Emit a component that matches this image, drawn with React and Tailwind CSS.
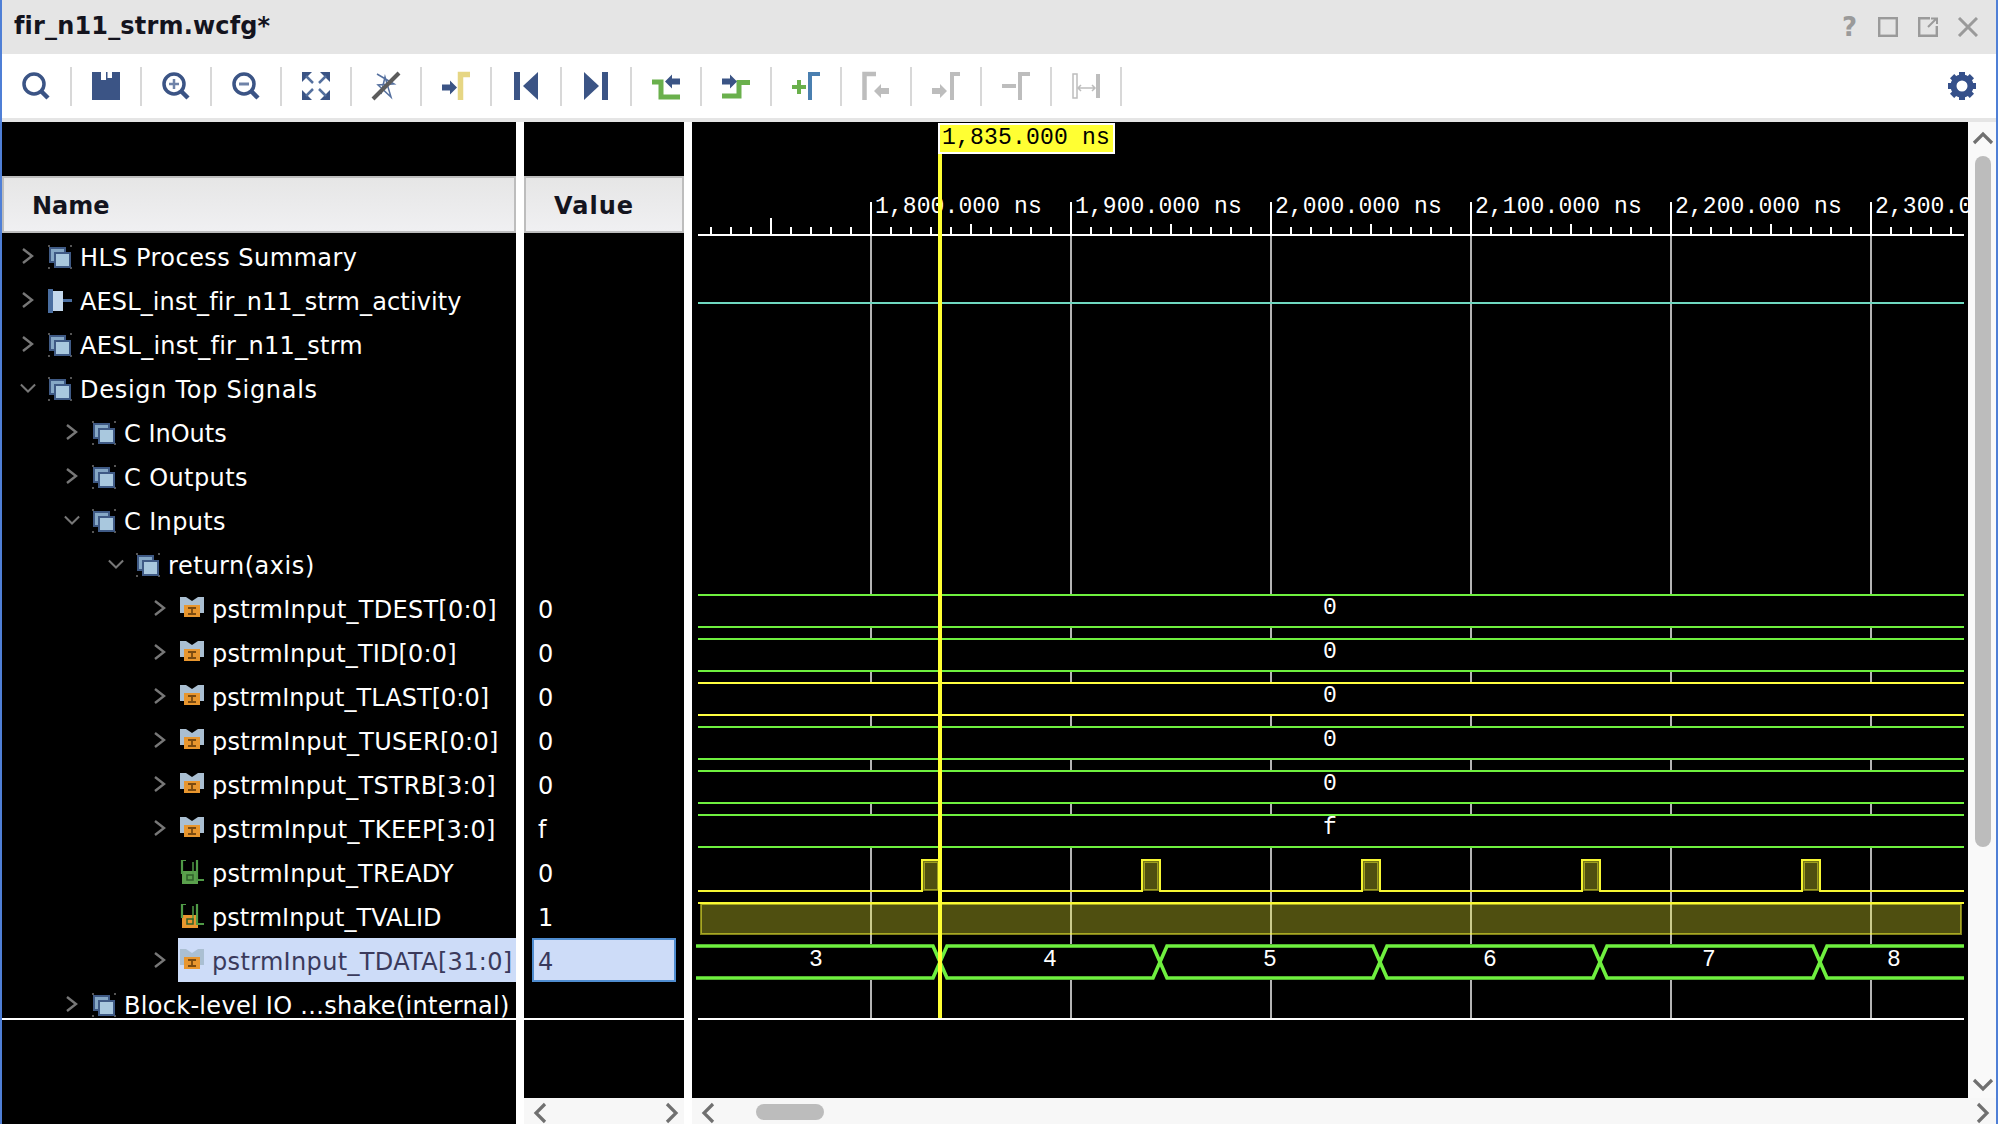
import React from 'react';

const C = '#3b5485';
const G = '#6ab04c';
const D = '#bdbdbd';

function Box({ children }) {
  return (
    <svg width="28" height="28" viewBox="0 0 28 28" className="block overflow-visible">
      {children}
    </svg>
  );
}

function Lens({ children }) {
  return (
    <>
      <circle cx="12" cy="12" r="10" fill="none" stroke={C} strokeWidth="3.5" />
      <path d="M19 19 L26 26" stroke={C} strokeWidth="4.5" />
      {children}
    </>
  );
}

function Arrow({ x, y, dir, fill }) {
  const d =
    dir === 'right'
      ? `M${x} ${y + 3} h8 v-4 l7 7 l-7 7 v-4 h-8 z`
      : `M${x + 15} ${y + 3} h-8 v-4 l-7 7 l7 7 v-4 h8 z`;
  return <path d={d} fill={fill} />;
}

const tools = [
  <Lens key="a" />,
  <path key="b" fillRule="evenodd" d="M0 0 H9 V8 H28 V28 H0 Z M14 0 H28 V8 H14 Z M15.5 0 H20 V6 H15.5 Z" fill={C} />,
  <Lens key="c"><path d="M7 12 H17 M12 7 V17" stroke="#6f83a8" strokeWidth="2.5" /></Lens>,
  <Lens key="d"><path d="M7 12 H17" stroke="#6f83a8" strokeWidth="3" /></Lens>,
  <g key="e">
    <g fill={C}>
      <path d="M0 0 H10 L0 10 Z" />
      <path d="M28 0 H18 L28 10 Z" />
      <path d="M0 28 H10 L0 18 Z" />
      <path d="M28 28 H18 L28 18 Z" />
    </g>
    <path d="M4 4 L11 11 M24 4 L17 11 M4 24 L11 17 M24 24 L17 17" stroke="#54709e" strokeWidth="2.5" />
  </g>,
  <g key="f">
    <path d="M5 2 L22 12 L6 13 L19 25 L13 5 L9 22" fill="none" stroke="#55709f" strokeWidth="1.5" />
    <path d="M1 27 L27 1" stroke="#5c5c5c" strokeWidth="4" />
  </g>,
  <g key="g">
    <Arrow x={0} y={9.5} dir="right" fill={C} />
    <path d="M18.5 28 V2.5 H28" fill="none" stroke="#e6d684" strokeWidth="5.5" />
  </g>,
  <g key="h" fill={C}>
    <rect x="2" y="0" width="6" height="28" />
    <path d="M26 0 V28 L11 14 Z" />
  </g>,
  <g key="i" fill={C}>
    <path d="M2 0 V28 L17 14 Z" />
    <rect x="20" y="0" width="6" height="28" />
  </g>,
  <g key="j">
    <path d="M0 10 H9 V25 H28" fill="none" stroke={G} strokeWidth="5" />
    <Arrow x={13} y={3.5} dir="left" fill={C} />
  </g>,
  <g key="k">
    <path d="M0 24 H17 V10.5 H28" fill="none" stroke={G} strokeWidth="5" />
    <Arrow x={0} y={3.5} dir="right" fill={C} />
  </g>,
  <g key="l">
    <path d="M0 15 H14 M7 8 V22" stroke={G} strokeWidth="4" />
    <path d="M18 28 V2 H28" fill="none" stroke="#4a7fb0" strokeWidth="4" />
  </g>,
  <g key="m">
    <path d="M2.5 28 V2 H14" fill="none" stroke={D} strokeWidth="4.5" />
    <Arrow x={12} y={13} dir="left" fill={D} />
  </g>,
  <g key="n">
    <Arrow x={0} y={13} dir="right" fill={D} />
    <path d="M20 28 V2 H28" fill="none" stroke={D} strokeWidth="4" />
  </g>,
  <g key="o">
    <path d="M0 14 H14" stroke={D} strokeWidth="4" />
    <path d="M18 28 V2 H28" fill="none" stroke={D} strokeWidth="4" />
  </g>,
  <g key="p">
    <rect x="1" y="2" width="4" height="24" fill="none" stroke={D} strokeWidth="1.5" />
    <rect x="24" y="2" width="4" height="24" fill={D} />
    <path d="M6 16 H23 M9 13 L6 16 L9 19 M20 13 L23 16 L20 19" fill="none" stroke={D} strokeWidth="1.5" />
  </g>,
];

function Gear() {
  const teeth = [0, 45, 90, 135, 180, 225, 270, 315];
  return (
    <Box>
      {teeth.map((a) => (
        <rect key={a} x="11" y="0" width="6" height="8" fill="#35508a" transform={`rotate(${a} 14 14)`} />
      ))}
      <circle cx="14" cy="14" r="8.5" fill="none" stroke="#35508a" strokeWidth="6" />
    </Box>
  );
}

function GroupIcon() {
  return (
    <svg width="24" height="24" viewBox="0 0 24 24" className="mt-px block shrink-0">
      <g fill="#555555">
        <rect x="0" y="0" width="2" height="2" />
        <rect x="22" y="0" width="2" height="2" />
        <rect x="0" y="22" width="2" height="2" />
        <rect x="22" y="22" width="2" height="2" />
      </g>
      <rect x="2" y="3" width="15" height="14" fill="#86a8c6" stroke="#3f5a85" strokeWidth="2" />
      <rect x="7" y="8" width="15" height="14" fill="#a9c8de" stroke="#3f5a85" strokeWidth="2" />
    </svg>
  );
}

function ActivityIcon() {
  return (
    <svg width="24" height="24" viewBox="0 0 24 24" className="mt-px block shrink-0">
      <rect x="0" y="0" width="5" height="24" fill="#4a6ea0" />
      <rect x="5" y="2" width="10" height="20" fill="#c4d8ec" />
      <rect x="15" y="10" width="9" height="3" fill="#4a6ea0" />
    </svg>
  );
}

function BusIcon() {
  return (
    <svg width="24" height="24" viewBox="0 0 24 24" className="block shrink-0">
      <path d="M0 1 H6 L12 5 L18 1 H24 V17 H20 V9 H4 V17 H0 Z" fill="#aabfd2" />
      <rect x="4" y="9" width="16" height="12" fill="#e8962e" />
      <path d="M8 12 H16 M12 12 V18 M8 18 H16" stroke="#7a4a10" strokeWidth="1.8" fill="none" />
    </svg>
  );
}

function WireIcon({ fill }) {
  return (
    <svg width="24" height="24" viewBox="0 0 24 24" className="block shrink-0">
      <rect x="2" y="11" width="16" height="13" fill={fill} />
      <path d="M2 0 V14 M17 0 V20 H24 M2 0 H6" fill="none" stroke="#4f9a46" strokeWidth="2.2" />
      <path d="M13 2 V16" stroke="#4f9a46" strokeWidth="1.5" />
      <rect x="7" y="15" width="6" height="5" fill="none" stroke="#2f5f2a" strokeWidth="1.5" />
    </svg>
  );
}

function ChevRight({ color = '#777777' }) {
  return (
    <svg width="16" height="18" viewBox="0 0 16 18" className="block">
      <path d="M3 2 L12 9 L3 16" fill="none" stroke={color} strokeWidth="2.4" />
    </svg>
  );
}

function ChevDown() {
  return (
    <svg width="18" height="12" viewBox="0 0 18 12" className="block">
      <path d="M1 2 L9 10 L17 2" fill="none" stroke="#777777" strokeWidth="2.2" />
    </svg>
  );
}

const rows = [
  { t: 'HLS Process Summary', pad: 'pl-[18px]', ch: 'r', icon: 'g', tr: 'tracking-[0.45px]' },
  { t: 'AESL_inst_fir_n11_strm_activity', pad: 'pl-[18px]', ch: 'r', icon: 'a', tr: 'tracking-[0.12px]' },
  { t: 'AESL_inst_fir_n11_strm', pad: 'pl-[18px]', ch: 'r', icon: 'g', tr: 'tracking-[0.25px]' },
  { t: 'Design Top Signals', pad: 'pl-[18px]', ch: 'd', icon: 'g', tr: 'tracking-[0.72px]' },
  { t: 'C InOuts', pad: 'pl-[62px]', ch: 'r', icon: 'g', tr: 'tracking-[0px]' },
  { t: 'C Outputs', pad: 'pl-[62px]', ch: 'r', icon: 'g', tr: 'tracking-[0.4px]' },
  { t: 'C Inputs', pad: 'pl-[62px]', ch: 'd', icon: 'g', tr: 'tracking-[0.37px]' },
  { t: 'return(axis)', pad: 'pl-[106px]', ch: 'd', icon: 'g', tr: 'tracking-[0.55px]' },
  { t: 'pstrmInput_TDEST[0:0]', pad: 'pl-[150px]', ch: 'r', icon: 'b', v: '0', tr: 'tracking-[0.25px]' },
  { t: 'pstrmInput_TID[0:0]', pad: 'pl-[150px]', ch: 'r', icon: 'b', v: '0', tr: 'tracking-[0.16px]' },
  { t: 'pstrmInput_TLAST[0:0]', pad: 'pl-[150px]', ch: 'r', icon: 'b', v: '0', tr: 'tracking-[0.04px]' },
  { t: 'pstrmInput_TUSER[0:0]', pad: 'pl-[150px]', ch: 'r', icon: 'b', v: '0', tr: 'tracking-[0.28px]' },
  { t: 'pstrmInput_TSTRB[3:0]', pad: 'pl-[150px]', ch: 'r', icon: 'b', v: '0', tr: 'tracking-[0.22px]' },
  { t: 'pstrmInput_TKEEP[3:0]', pad: 'pl-[150px]', ch: 'r', icon: 'b', v: 'f', tr: 'tracking-[0.34px]' },
  { t: 'pstrmInput_TREADY', pad: 'pl-[150px]', icon: 'wg', v: '0', tr: 'tracking-[0.18px]' },
  { t: 'pstrmInput_TVALID', pad: 'pl-[150px]', icon: 'wo', v: '1', tr: 'tracking-[0.03px]' },
  { t: 'pstrmInput_TDATA[31:0]', pad: 'pl-[150px]', ch: 'r', icon: 'b', v: '4', sel: true, tr: 'tracking-[0.33px]' },
];

function RowIcon({ k }) {
  if (k === 'g') return <GroupIcon />;
  if (k === 'a') return <ActivityIcon />;
  if (k === 'b') return <BusIcon />;
  if (k === 'wg') return <WireIcon fill="#5aa04c" />;
  return <WireIcon fill="#e8962e" />;
}

function TreeRow({ r }) {
  return (
    <div className={`flex h-[44px] items-center ${r.pad}`}>
      <div className="flex h-full w-4 shrink-0 items-center justify-center">
        {r.ch === 'r' && <ChevRight />}
        {r.ch === 'd' && <ChevDown />}
      </div>
      <div className={`ml-[10px] flex h-full flex-1 items-center pl-[2px] ${r.sel ? 'bg-[#cddcf8] text-[#3a3a5c]' : 'text-white'}`}>
        <RowIcon k={r.icon} />
        <span className={`ml-2 whitespace-nowrap pt-[3px] text-[24px] ${r.tr}`}>{r.t}</span>
      </div>
    </div>
  );
}

function HeaderCell({ children, pad }) {
  return (
    <div className={`flex h-[57px] items-center border-2 border-[#bdbdbd] bg-gradient-to-b from-[#e6e6e6] to-[#f0f0f2] pt-[2px] text-[24px] font-bold text-[#14141e] ${pad}`}>
      {children}
    </div>
  );
}

const majors = [871, 1071, 1271, 1471, 1671, 1871];
const labels = ['1,800.000 ns', '1,900.000 ns', '2,000.000 ns', '2,100.000 ns', '2,200.000 ns', '2,300.000 ns'];
const segs = [[235, 595], [627, 639], [671, 683], [715, 727], [759, 771], [803, 815], [847, 944], [980, 1018]];
const GREEN = '#6ff03f';
const YEL = '#ffff40';
const busLines = [
  [595, GREEN], [627, GREEN], [639, GREEN], [671, GREEN], [683, YEL], [715, YEL],
  [727, GREEN], [759, GREEN], [771, GREEN], [803, GREEN], [815, GREEN], [847, GREEN],
];
const busLabels = [[614, '0'], [658, '0'], [702, '0'], [746, '0'], [790, '0'], [834, 'f']];
const pulses = [921, 1141, 1361, 1581, 1801];
const crosses = [940, 1160, 1380, 1600, 1820];
const dataVals = [[816, '3'], [1050, '4'], [1270, '5'], [1490, '6'], [1709, '7'], [1894, '8']];

function ticks() {
  const out = [];
  for (let x = 711; x <= 1960; x += 20) {
    if (majors.includes(x)) continue;
    let top = 227;
    if (x === 771) top = 218;
    else if ((x - 771) % 200 === 0 || (x - 971) % 200 === 0) top = 224;
    out.push(<path key={x} d={`M${x} ${top} V235`} stroke="#ffffff" strokeWidth="2" />);
  }
  return out;
}

function railPath(flip) {
  const a = flip ? 978 : 946;
  const b = flip ? 946 : 978;
  let d = `M696 ${a}`;
  crosses.forEach((c, i) => {
    const to = i % 2 === 0 ? b : a;
    d += ` H${c - 7} L${c + 7} ${to}`;
  });
  return d + ' H1964';
}

function pulsePath() {
  let d = 'M698 891';
  pulses.forEach((p) => {
    d += ` H${p + 1} V860 H${p + 19} V891`;
  });
  return d + ' H1964';
}

function Waves() {
  return (
    <svg width="1276" height="976" viewBox="692 122 1276 976" className="block font-['Liberation_Mono',monospace]" shapeRendering="crispEdges">
      {majors.map((x) => (
        <g key={x}>
          <path d={`M${x} 202 V235`} stroke="#ffffff" strokeWidth="2" />
          {segs.map(([a, b]) => (
            <path key={a} d={`M${x} ${a} V${b}`} stroke="#b4b4b4" strokeWidth="2" />
          ))}
        </g>
      ))}
      <path d="M698 235 H1964" stroke="#ffffff" strokeWidth="2" />
      {ticks()}
      {majors.map((x, i) => (
        <text key={x} x={x + 4} y="213" fontSize="23" letterSpacing="0.1" fill="#ffffff">{labels[i]}</text>
      ))}
      <path d="M698 303 H1964" stroke="#6fd9c0" strokeWidth="2" />
      {busLines.map(([y, c]) => (
        <path key={y} d={`M698 ${y} H1964`} stroke={c} strokeWidth="2" />
      ))}
      {busLabels.map(([y, s]) => (
        <text key={y} x="1330" y={y} fontSize="23" fill="#ffffff" textAnchor="middle">{s}</text>
      ))}
      {pulses.map((p) => (
        <rect key={p} x={p + 3} y="862" width="14" height="28" fill="#ffff33" fillOpacity="0.31" stroke="#ffff33" strokeOpacity="0.45" strokeWidth="2" />
      ))}
      <path d={pulsePath()} fill="none" stroke="#f6f633" strokeWidth="2" />
      <path d="M698 903 H1964" stroke="#f6f633" strokeWidth="2" />
      <rect x="701" y="904" width="1260" height="30" fill="#ffff33" fillOpacity="0.31" stroke="#ffff33" strokeOpacity="0.5" strokeWidth="2" />
      <g shapeRendering="auto">
        <path d={railPath(false)} fill="none" stroke={GREEN} strokeWidth="3.6" />
        <path d={railPath(true)} fill="none" stroke={GREEN} strokeWidth="3.6" />
      </g>
      {dataVals.map(([x, s]) => (
        <text key={x} x={x} y="966" fontSize="23" fill="#ffffff" textAnchor="middle">{s}</text>
      ))}
      <path d="M698 1019 H1964" stroke="#ffffff" strokeWidth="2" />
      <path d="M940 153 V1018" stroke="#ffff33" strokeWidth="4" />
      <rect x="939" y="124" width="175" height="29" fill="#ffff33" stroke="#ffffff" strokeWidth="2" />
      <text x="942" y="144" fontSize="23" letterSpacing="0.2" fill="#000000">1,835.000 ns</text>
    </svg>
  );
}

function HBarChevronLeft() {
  return (
    <svg width="14" height="22" viewBox="0 0 14 22" className="mt-[3px] block">
      <path d="M12 2 L3 11 L12 20" fill="none" stroke="#707070" strokeWidth="3.2" />
    </svg>
  );
}

function HBarChevronRight() {
  return (
    <svg width="14" height="22" viewBox="0 0 14 22" className="mt-[3px] block">
      <path d="M2 2 L11 11 L2 20" fill="none" stroke="#707070" strokeWidth="3.2" />
    </svg>
  );
}

export default function App() {
  return (
    <div className="flex h-[1124px] w-[1998px] flex-col overflow-hidden border-x-2 border-[#4f7fd6] bg-white font-['DejaVu_Sans',sans-serif]">
      <div className="flex h-[54px] shrink-0 items-center bg-[#e5e5e5] pl-[12px] pr-[18px]">
        <span className="pb-[2px] text-[24px] font-bold tracking-[0.17px] text-[#14141e]">fir_n11_strm.wcfg*</span>
        <div className="flex-1" />
        <span className="mr-[21px] text-[26px] font-bold leading-none text-[#9a9a9a]">?</span>
        <svg width="100" height="20" viewBox="0 0 100 20" className="block">
          <g fill="none" stroke="#9a9a9a" strokeWidth="2.4">
            <rect x="1.2" y="1.2" width="17.6" height="17.6" />
            <path d="M52 1.2 H41.2 V18.8 H58.8 V9" />
            <path d="M50 10 L58 2 M53 1.5 H59 V7" strokeWidth="2" />
            <path d="M81 1 L99 19 M99 1 L81 19" strokeWidth="3" />
          </g>
        </svg>
      </div>

      <div className="flex h-[68px] shrink-0 items-center border-b-4 border-[#e5e5e5] bg-white pr-[20px]">
        {tools.map((icon, i) => (
          <React.Fragment key={i}>
            <div className="flex w-[68px] items-center justify-center">
              <Box>{icon}</Box>
            </div>
            <div className="h-[39px] w-[2px] bg-[#d8d8d8]" />
          </React.Fragment>
        ))}
        <div className="flex-1" />
        <Gear />
      </div>

      <div className="flex min-h-0 flex-1 bg-white">
        <div className="flex w-[514px] shrink-0 flex-col bg-black">
          <div className="h-[54px] shrink-0" />
          <HeaderCell pad="pl-[28px]">Name</HeaderCell>
          <div className="mt-px shrink-0">
            {rows.map((r) => (
              <TreeRow key={r.t} r={r} />
            ))}
            <div className="h-[38px] border-b-2 border-white">
              <TreeRow r={{ t: 'Block-level IO ...shake(internal)', pad: 'pl-[62px]', ch: 'r', icon: 'g', tr: 'tracking-[0.3px]' }} />
            </div>
          </div>
          <div className="flex-1" />
        </div>

        <div className="w-2 shrink-0" />

        <div className="flex w-[160px] shrink-0 flex-col bg-black">
          <div className="h-[54px] shrink-0" />
          <HeaderCell pad="pl-[28px] tracking-[1px]">Value</HeaderCell>
          <div className="mt-px shrink-0">
            {rows.map((r) => (
              <div
                key={r.t}
                className={`mx-2 flex h-[44px] w-[144px] items-center border-2 pl-1 pt-[3px] text-[24px] ${r.sel ? 'border-[#4f8ccf] bg-[#cddcf8] text-[#3a3a5c]' : 'border-transparent text-white'}`}
              >
                {r.v}
              </div>
            ))}
            <div className="h-[38px] border-b-2 border-white" />
          </div>
          <div className="flex-1" />
          <div className="flex h-[26px] shrink-0 items-center justify-between bg-[#f7f7f7] pl-[9px] pr-[5px]">
            <HBarChevronLeft />
            <HBarChevronRight />
          </div>
        </div>

        <div className="w-2 shrink-0" />

        <div className="flex min-w-0 flex-1 flex-col">
          <div className="flex min-h-0 flex-1">
            <div className="w-[1276px] shrink-0 overflow-hidden bg-black">
              <Waves />
            </div>
            <div className="flex w-[28px] shrink-0 flex-col items-center bg-[#f9f9f9] pt-[9px] pb-[6px] pl-[2px]">
              <svg width="22" height="14" viewBox="0 0 22 14" className="block shrink-0">
                <path d="M2 12 L11 3 L20 12" fill="none" stroke="#707070" strokeWidth="3.2" />
              </svg>
              <div className="mt-[11px] h-[691px] w-4 shrink-0 rounded-full bg-[#bcbcbc]" />
              <div className="flex-1" />
              <svg width="22" height="14" viewBox="0 0 22 14" className="block shrink-0">
                <path d="M2 2 L11 11 L20 2" fill="none" stroke="#707070" strokeWidth="3.2" />
              </svg>
            </div>
          </div>
          <div className="flex h-[26px] shrink-0 items-center bg-[#f7f7f7] pl-[9px] pr-[6px]">
            <HBarChevronLeft />
            <div className="ml-[41px] mt-[2px] h-4 w-[68px] rounded-full bg-[#bcbcbc]" />
            <div className="flex-1" />
            <HBarChevronRight />
          </div>
        </div>
      </div>
    </div>
  );
}
